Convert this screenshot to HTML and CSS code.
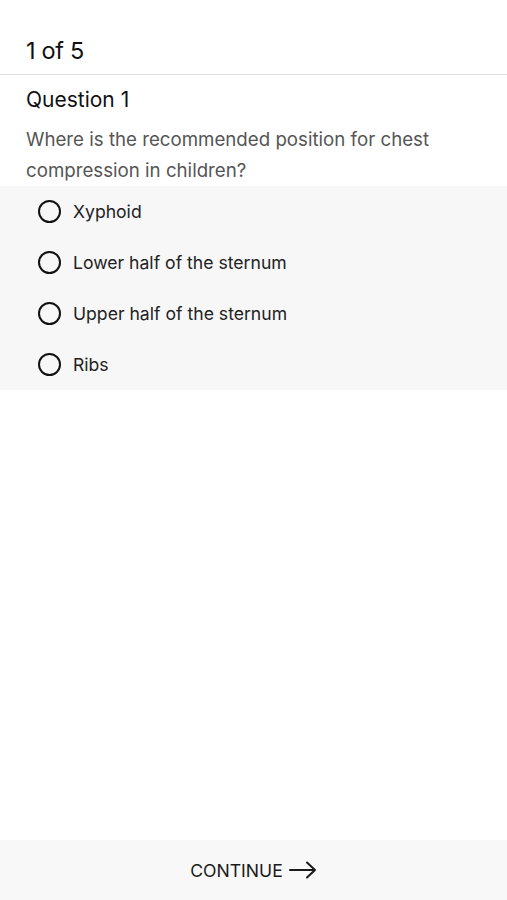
FILE: index.html
```html
<!DOCTYPE html>
<html>
<head>
<meta charset="utf-8">
<link rel="stylesheet" href="styles.css">
</head>
<body>
<div class="screen">
  <header class="top">
    <span class="progress">1 of 5</span>
  </header>
  <section class="question">
    <h2 class="q-title">Question 1</h2>
    <p class="q-text">Where is the recommended position for chest compression in children?</p>
  </section>
  <ul class="options">
    <li class="option"><span class="radio"></span><span class="label">Xyphoid</span></li>
    <li class="option"><span class="radio"></span><span class="label">Lower half of the sternum</span></li>
    <li class="option"><span class="radio"></span><span class="label">Upper half of the sternum</span></li>
    <li class="option"><span class="radio"></span><span class="label">Ribs</span></li>
  </ul>
  <footer class="footer">
    <button class="continue">CONTINUE
      <svg class="arrow" width="28" height="18" viewBox="0 0 28 18"><path d="M1 9H26M18 1.5L26 9L18 16.5" fill="none" stroke="#1a1a1a" stroke-width="2" stroke-linecap="round" stroke-linejoin="round"/></svg>
    </button>
  </footer>
</div>
</body>
</html>
```

FILE: styles.css
```css
* { box-sizing: border-box; }
html, body { margin: 0; padding: 0; background: #fff; }
body { font-family: Inter, "Noto Sans", "Liberation Sans", sans-serif; color: #1c1c1c; }
.screen { display: flex; flex-direction: column; height: 900px; }
.top { height: 75px; display: flex; align-items: center; padding: 26px 26px 0; border-bottom: 1px solid #dedede; }
.progress { font-size: 23.5px; letter-spacing: -0.3px; color: #111; }
.question { padding: 12px 26px 0; }
.q-title { margin: 0; font-size: 21px; font-weight: 400; line-height: 26px; color: #111; }
.q-text { margin: 11px 0 0; font-size: 18.7px; line-height: 31px; color: #555; }
.options { list-style: none; margin: 0; padding: 0 0 0 38px; background: #f7f7f7; }
.option { height: 51px; display: flex; align-items: center; gap: 12px; }
.radio { width: 23px; height: 23px; border: 2px solid #111; border-radius: 50%; flex: none; }
.label { font-size: 17.6px; color: #222; }
.footer { margin-top: auto; height: 60px; background: #f8f8f8; display: flex; align-items: center; justify-content: center; }
.continue { background: none; border: 0; padding: 0; display: flex; align-items: center; gap: 6px; font-family: inherit; font-size: 17.6px; color: #1a1a1a; }
.arrow { display: block; }
```
